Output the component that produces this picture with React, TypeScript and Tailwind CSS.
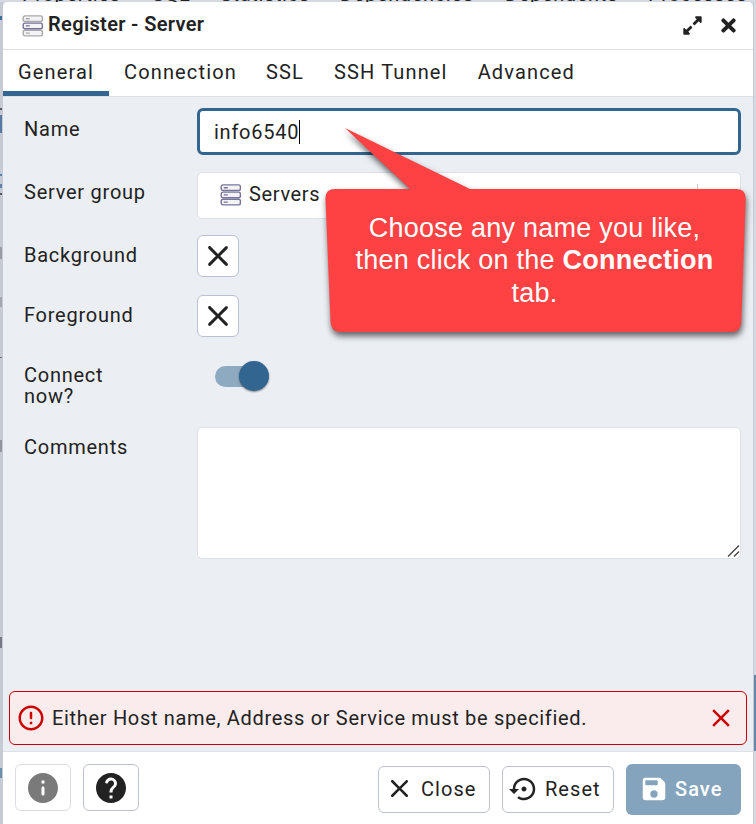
import React from "react";
import { FaExpandAlt, FaTimes } from "react-icons/fa";

const ICONS = {
  close:
    "M18.3 5.71c-.39-.39-1.02-.39-1.41 0L12 10.59 7.11 5.7c-.39-.39-1.02-.39-1.41 0-.39.39-.39 1.02 0 1.41L10.59 12 5.7 16.89c-.39.39-.39 1.02 0 1.41.39.39 1.02.39 1.41 0L12 13.41l4.89 4.89c.39.39 1.02.39 1.41 0 .39-.39.39-1.02 0-1.41L13.41 12l4.89-4.89c.38-.38.38-1.02 0-1.4z",
  info: "M12 2C6.48 2 2 6.48 2 12s4.48 10 10 10 10-4.48 10-10S17.52 2 12 2zm0 15c-.55 0-1-.45-1-1v-4c0-.55.45-1 1-1s1 .45 1 1v4c0 .55-.45 1-1 1zm1-8h-2V7h2v2z",
  help: "M12 2C6.48 2 2 6.48 2 12s4.48 10 10 10 10-4.48 10-10S17.52 2 12 2zm1 17h-2v-2h2v2zm2.07-7.75-.9.92c-.5.51-.86.97-1.04 1.69-.08.32-.13.68-.13 1.14h-2v-.5c0-.46.08-.9.22-1.31.2-.58.53-1.1.95-1.52l1.24-1.26c.46-.44.68-1.1.55-1.8-.13-.72-.69-1.33-1.39-1.53-1.11-.31-2.14.32-2.47 1.27-.12.37-.43.65-.82.65h-.3C8.4 9 8 8.44 8.16 7.88c.43-1.47 1.68-2.59 3.23-2.83 1.52-.24 2.97.55 3.87 1.8 1.18 1.63.83 3.38-.19 4.4z",
  error:
    "M12 7c.55 0 1 .45 1 1v4c0 .55-.45 1-1 1s-1-.45-1-1V8c0-.55.45-1 1-1zm-.01-5C6.47 2 2 6.48 2 12s4.47 10 9.99 10C17.52 22 22 17.52 22 12S17.52 2 11.99 2zM12 20c-4.42 0-8-3.58-8-8s3.58-8 8-8 8 3.58 8 8-3.58 8-8 8zm1-3h-2v-2h2v2z",
  dismiss:
    "M19 6.41 17.59 5 12 10.59 6.41 5 5 6.41 10.59 12 5 17.59 6.41 19 12 13.41 17.59 19 19 17.59 13.41 12z",
  reset:
    "M14 12c0-1.1-.9-2-2-2s-2 .9-2 2 .9 2 2 2 2-.9 2-2zm-2-9c-4.97 0-9 4.03-9 9H0l4 4 4-4H5c0-3.87 3.13-7 7-7s7 3.13 7 7-3.13 7-7 7c-1.51 0-2.91-.49-4.06-1.3l-1.42 1.44C8.04 20.3 9.94 21 12 21c4.97 0 9-4.03 9-9s-4.03-9-9-9z",
  save: "M17.59 3.59c-.38-.38-.89-.59-1.42-.59H5c-1.11 0-2 .9-2 2v14c0 1.1.9 2 2 2h14c1.1 0 2-.9 2-2V7.83c0-.53-.21-1.04-.59-1.41l-2.82-2.83zM12 19c-1.66 0-3-1.34-3-3s1.34-3 3-3 3 1.34 3 3-1.34 3-3 3zm2-10H6c-.55 0-1-.45-1-1V6c0-.55.45-1 1-1h8c.55 0 1 .45 1 1v2c0 .55-.45 1-1 1z",
};

function Icon({ name, className }: { name: keyof typeof ICONS; className: string }) {
  return (
    <svg viewBox="0 0 24 24" fill="currentColor" className={`shrink-0 ${className}`}>
      <path d={ICONS[name]} />
    </svg>
  );
}

function ServerIcon({ outer, inner, className }: { outer: string; inner: string; className: string }) {
  return (
    <svg viewBox="0 0 22 22" fill="#f4f4f7" strokeWidth="1.4" className={`h-[22px] w-[22px] shrink-0 ${className}`}>
      <rect x="1.2" y="0.9" width="19.2" height="5.6" rx="1.8" stroke={outer} />
      <rect x="1.2" y="15.3" width="19.2" height="5.6" rx="1.8" stroke={outer} />
      <rect x="1.2" y="8.1" width="19.2" height="5.6" rx="1.8" stroke={inner} />
      <path d="M3.8 3.7h4M3.8 18.1h4" stroke={outer} />
      <path d="M3.8 10.9h4" stroke={inner} />
    </svg>
  );
}

const backgroundTabs = [
  { label: "Properties", box: "ml-[22px] w-[130px]" },
  { label: "SQL", box: "w-[68px]" },
  { label: "Statistics", box: "w-[120px]" },
  { label: "Dependencies", box: "w-[165px]" },
  { label: "Dependents", box: "w-[143px]" },
  { label: "Processes", box: "w-[108px]" },
];

const edgeMarks = [
  "mt-[14px] h-[4px] bg-[#3f6f9b]",
  "mt-[88px] h-[2px] bg-[#55565f]",
  "mt-[5px] h-[18px] bg-[#5679a6]",
  "mt-[41px] h-[2px] bg-[#5a83ae]",
  "mt-[8px] h-[4px] bg-[#5a83ae]",
  "mt-[5px] h-[2px] bg-[#55565f]",
  "mt-[52px] h-[12px] bg-[#9a9ba6]",
  "mt-[38px] h-[10px] bg-[#a3a5b0]",
  "mt-[50px] h-[1px] bg-[#6b6b70]",
  "mt-[82px] h-[12px] bg-[#92959f]",
  "mt-[185px] h-[11px] bg-[#777987]",
  "mt-[120px] h-[10px] bg-[#6d8fae]",
];

function Field({ label, className, children }: { label: string; className: string; children: React.ReactNode }) {
  return (
    <div className={`flex items-start ${className}`}>
      <label className="w-[173px] shrink-0 pr-12 pt-[10px] leading-[21px] tracking-[0.75px]">{label}</label>
      {children}
    </div>
  );
}

function ColorButton() {
  return (
    <button className="flex h-[42px] w-[42px] items-center justify-center rounded-[6px] border border-[#bac1d2] bg-white">
      <Icon name="close" className="h-9 w-9" />
    </button>
  );
}

function Callout() {
  return (
    <div className="absolute left-[316px] top-[120px] h-[230px] w-[440px]">
      <svg viewBox="316 120 440 230" className="absolute inset-0 h-full w-full drop-shadow-[1px_4px_3px_rgba(0,0,0,0.6)]">
        <path
          fill="#fe4244"
          d="M345 128 470 189H736Q746 189 745.7 199L741.3 322Q741 332 731 332H341Q331 332 330.5 322L325.5 199Q325 189 335 189H410Z"
        />
      </svg>
      <p className="relative mt-[92px] pr-[3px] text-center font-['Liberation_Sans',sans-serif] text-[27px] leading-[32.4px] tracking-[0.24px] text-white">
        Choose any name you like,
        <br />
        then click on the <b>Connection</b>
        <br />
        tab.
      </p>
    </div>
  );
}

export default function App() {
  return (
    <div className="relative flex h-[824px] w-[756px] flex-col overflow-hidden bg-[#d5d9e1] font-[Roboto,sans-serif] text-[20px] tracking-[0.65px] text-[#222]">
      <div className="flex h-[2px] shrink-0 items-end overflow-hidden">
        {backgroundTabs.map((t) => (
          <span key={t.label} className={`h-[8px] shrink-0 leading-[0px] ${t.box}`}>
            {t.label}
          </span>
        ))}
      </div>
      <div className="flex min-h-0 flex-1">
        <div className="w-[3px] shrink-0 bg-[#c6cad5]">
          {edgeMarks.map((mark) => (
            <div key={mark} className={`w-[2px] ${mark}`} />
          ))}
        </div>
        <div className="flex w-[750px] shrink-0 flex-col overflow-hidden rounded-t-[5px] bg-[#ebeef3]">
          <header className="flex h-[48px] shrink-0 items-center border-b border-[#dde0e6] bg-white pl-[19px] pr-[14px]">
            <ServerIcon outer="#a9a9a9" inner="#77709b" className="mt-[1px]" />
            <h1 className="ml-[4px] mt-[-4px] text-[20px] font-semibold tracking-[0.35px]">Register - Server</h1>
            <FaExpandAlt className="ml-auto h-[21px] w-[21px]" />
            <FaTimes className="ml-[15px] h-[21px] w-[21px]" />
          </header>
          <nav className="flex h-[47px] shrink-0 border-b border-[#dde0e6] bg-white leading-[44px] tracking-[1.15px]">
            <span className="h-[46px] w-[106px] border-b-[5px] border-[#326690] pl-[15px]">General</span>
            <span className="ml-[15px]">Connection</span>
            <span className="ml-[29px]">SSL</span>
            <span className="ml-[30px]">SSH Tunnel</span>
            <span className="ml-[30px]">Advanced</span>
          </nav>

          <main className="flex min-h-0 flex-1 flex-col pl-[21px] pr-[12px] pt-[11px]">
            <Field label="Name" className="h-[64px] [&>label]:pt-[11px]">
              <div className="flex h-[47px] flex-1 items-center rounded-[6px] border-[3px] border-[#326690] bg-white pl-[14px]">
                <span className="tracking-[0.75px]">info6540</span>
                <span className="h-[24px] w-px bg-black" />
              </div>
            </Field>
            <Field label="Server group" className="h-[63px] whitespace-nowrap">
              <div className="flex h-[47px] flex-1 items-center rounded-[5px] border border-[#dde0e6] bg-white pl-[22px] pr-[42px]">
                <ServerIcon outer="#77759b" inner="#77759b" className="mt-[-1px]" />
                <span className="ml-[7px] mt-[-3px]">Servers</span>
                <span className="ml-auto h-[23px] w-px bg-[#ccc]" />
              </div>
            </Field>
            <Field label="Background" className="h-[60px]">
              <ColorButton />
            </Field>
            <Field label="Foreground" className="h-[60px]">
              <ColorButton />
            </Field>
            <Field label="Connect now?" className="h-[72px]">
              <div className="ml-[18px] mt-[6px] flex h-[30px] items-center">
                <div className="h-[21px] w-[48px] rounded-full bg-[#8eaac1]" />
                <div className="-ml-[24px] h-[30px] w-[30px] rounded-full bg-[#326690] shadow-[0_1px_2px_rgba(0,0,0,0.45)]" />
              </div>
            </Field>
            <Field label="Comments" className="flex-1">
              <div className="flex h-[132px] flex-1 items-end justify-end rounded-[5px] border border-[#dde0e6] bg-white">
                <svg viewBox="0 0 13 13" className="h-[13px] w-[13px]" stroke="#444" strokeWidth="1.3">
                  <path d="M1 11.5 12 0.5M7 11.5 12 6.5" />
                </svg>
              </div>
            </Field>
          </main>

          <div className="mx-[6px] mb-[6px] flex h-[54px] shrink-0 items-center rounded-[6px] border border-[#cc0000] bg-[#faecec] pl-[6px] pr-[10px]">
            <Icon name="error" className="h-[30px] w-[30px] text-[#cc0000]" />
            <span className="ml-[6px] tracking-[0.68px]">Either Host name, Address or Service must be specified.</span>
            <Icon name="dismiss" className="ml-auto h-[30px] w-[30px] text-[#cc0000]" />
          </div>

          <footer className="flex h-[73px] shrink-0 items-start border-t border-[#dde0e6] bg-white pl-[12px] pr-[12px] pt-[12px] tracking-[1.05px]">
            <button className="flex h-[47px] w-[56px] items-center justify-center rounded-[6px] border border-[#dadde5]">
              <Icon name="info" className="h-9 w-9 text-[#7a7a7a]" />
            </button>
            <button className="ml-[12px] flex h-[47px] w-[56px] items-center justify-center rounded-[6px] border border-[#bac1d2]">
              <Icon name="help" className="h-9 w-9" />
            </button>
            <button className="ml-auto mt-[2px] flex h-[47px] w-[112px] items-center rounded-[6px] border border-[#bac1d2] pb-[2px] pl-[5px]">
              <Icon name="close" className="h-[31px] w-[31px]" />
              <span className="ml-[6px]">Close</span>
            </button>
            <button className="ml-[12px] mt-[2px] flex h-[47px] w-[112px] items-center rounded-[6px] border border-[#bac1d2] pb-[2px] pl-[6px]">
              <Icon name="reset" className="h-[30px] w-[30px]" />
              <span className="ml-[6px]">Reset</span>
            </button>
            <button className="ml-[12px] flex h-[51px] w-[115px] items-center rounded-[6px] bg-[#84a3bc] pb-[2px] pl-[13px] font-medium text-white">
              <Icon name="save" className="h-[30px] w-[30px]" />
              <span className="ml-[6px]">Save</span>
            </button>
          </footer>
        </div>
        <div className="flex flex-1 flex-col border-l border-[#c5cad6]">
          <div className="mt-[673px] h-[76px] border-l-2 border-[#6688a8]" />
        </div>
      </div>
      <Callout />
    </div>
  );
}
